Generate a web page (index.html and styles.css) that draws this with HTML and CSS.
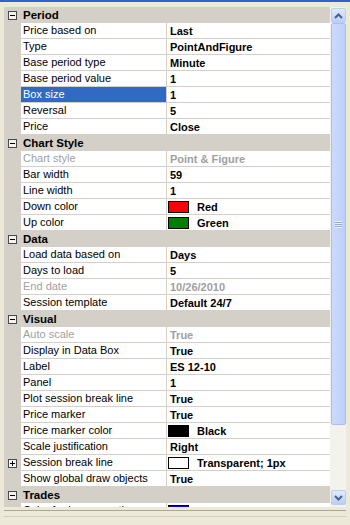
FILE: index.html
```html
<!DOCTYPE html>
<html lang="en">
<head>
    <meta charset="UTF-8">
    <meta name="viewport" content="width=device-width, initial-scale=1.0">
    <title>Chart Properties</title>
    <link rel="stylesheet" href="styles.css">
</head>
<body>

    <div class="titlebar"></div>

    <div class="frame">
        <div class="grid">
            <!-- Period -->
            <div class="cat"><div class="gutter"><span class="toggle minus"></span></div><div class="cat-name">Period</div></div>
            <div class="row"><div class="gutter"></div><div class="label">Price based on</div><div class="value">Last</div></div>
            <div class="row"><div class="gutter"></div><div class="label">Type</div><div class="value">PointAndFigure</div></div>
            <div class="row"><div class="gutter"></div><div class="label">Base period type</div><div class="value">Minute</div></div>
            <div class="row"><div class="gutter"></div><div class="label">Base period value</div><div class="value">1</div></div>
            <div class="row"><div class="gutter"></div><div class="label selected">Box size</div><div class="value">1</div></div>
            <div class="row"><div class="gutter"></div><div class="label">Reversal</div><div class="value">5</div></div>
            <div class="row"><div class="gutter"></div><div class="label">Price</div><div class="value">Close</div></div>

            <!-- Chart Style -->
            <div class="cat"><div class="gutter"><span class="toggle minus"></span></div><div class="cat-name">Chart Style</div></div>
            <div class="row disabled"><div class="gutter"></div><div class="label">Chart style</div><div class="value">Point &amp; Figure</div></div>
            <div class="row"><div class="gutter"></div><div class="label">Bar width</div><div class="value">59</div></div>
            <div class="row"><div class="gutter"></div><div class="label">Line width</div><div class="value">1</div></div>
            <div class="row"><div class="gutter"></div><div class="label">Down color</div><div class="value"><span class="swatch red"></span>Red</div></div>
            <div class="row"><div class="gutter"></div><div class="label">Up color</div><div class="value"><span class="swatch green"></span>Green</div></div>

            <!-- Data -->
            <div class="cat"><div class="gutter"><span class="toggle minus"></span></div><div class="cat-name">Data</div></div>
            <div class="row"><div class="gutter"></div><div class="label">Load data based on</div><div class="value">Days</div></div>
            <div class="row"><div class="gutter"></div><div class="label">Days to load</div><div class="value">5</div></div>
            <div class="row disabled"><div class="gutter"></div><div class="label">End date</div><div class="value">10/26/2010</div></div>
            <div class="row"><div class="gutter"></div><div class="label">Session template</div><div class="value">Default 24/7</div></div>

            <!-- Visual -->
            <div class="cat"><div class="gutter"><span class="toggle minus"></span></div><div class="cat-name">Visual</div></div>
            <div class="row disabled"><div class="gutter"></div><div class="label">Auto scale</div><div class="value">True</div></div>
            <div class="row"><div class="gutter"></div><div class="label">Display in Data Box</div><div class="value">True</div></div>
            <div class="row"><div class="gutter"></div><div class="label">Label</div><div class="value">ES 12-10</div></div>
            <div class="row"><div class="gutter"></div><div class="label">Panel</div><div class="value">1</div></div>
            <div class="row"><div class="gutter"></div><div class="label">Plot session break line</div><div class="value">True</div></div>
            <div class="row"><div class="gutter"></div><div class="label">Price marker</div><div class="value">True</div></div>
            <div class="row"><div class="gutter"></div><div class="label">Price marker color</div><div class="value"><span class="swatch black"></span>Black</div></div>
            <div class="row"><div class="gutter"></div><div class="label">Scale justification</div><div class="value">Right</div></div>
            <div class="row"><div class="gutter"><span class="toggle plus"></span></div><div class="label">Session break line</div><div class="value"><span class="swatch clear"></span>Transparent; 1px</div></div>
            <div class="row"><div class="gutter"></div><div class="label">Show global draw objects</div><div class="value">True</div></div>

            <!-- Trades -->
            <div class="cat"><div class="gutter"><span class="toggle minus"></span></div><div class="cat-name">Trades</div></div>
            <div class="row"><div class="gutter"></div><div class="label">Color for buy executions</div><div class="value"><span class="swatch blue"></span>Blue</div></div>
        </div>

        <div class="scrollbar">
            <div class="sb-button">
                <svg width="9" height="6" viewBox="0 0 9 6"><polyline points="1,5 4.5,1.5 8,5" fill="none" stroke="#4d6185" stroke-width="2"/></svg>
            </div>
            <div class="sb-thumb"><span class="grip"></span></div>
            <div class="sb-track"></div>
            <div class="sb-button">
                <svg width="9" height="6" viewBox="0 0 9 6"><polyline points="1,1 4.5,4.5 8,1" fill="none" stroke="#4d6185" stroke-width="2"/></svg>
            </div>
        </div>
    </div>

    <div class="help-panel"></div>

</body>
</html>
```

FILE: styles.css
```css
body {
    font-family: "Liberation Sans", Arial, sans-serif;
    font-size: 11px;
    margin: 0;
    width: 350px;
    height: 525px;
    overflow: hidden;
    background-color: #ece9d8;
    color: #000;
}

.titlebar {
    height: 2px;
    background-color: #2f62cf;
}

/* Grid + scrollbar */
.frame {
    display: flex;
    height: 500px;
    margin: 5px 4px 0 4px;
    overflow: hidden;
}

.grid {
    width: 326px;
    background-color: #fff;
    overflow: hidden;
}

.row,
.cat {
    display: flex;
    height: 16px;
}

.gutter {
    width: 17px;
    flex-shrink: 0;
    display: flex;
    align-items: center;
    background-color: #d4d0c8;
}

.label {
    width: 143px;
    padding-left: 2px;
    border-right: 1px solid #d4d0c8;
    border-bottom: 1px solid #d4d0c8;
    line-height: 15px;
    white-space: nowrap;
    overflow: hidden;
}

.label.selected {
    background-color: #316ac5;
    color: #fff;
}

.value {
    flex: 1;
    display: flex;
    align-items: center;
    padding-left: 3px;
    height: 15px;
    border-bottom: 1px solid #d4d0c8;
    font-weight: bold;
    white-space: nowrap;
}

.disabled .label,
.disabled .value {
    color: #a0a0a0;
}

/* Category header */
.cat {
    background-color: #d4d0c8;
}

.cat-name {
    padding-left: 2px;
    line-height: 16px;
    font-weight: bold;
    font-size: 11.5px;
}

.toggle {
    position: relative;
    width: 7px;
    height: 7px;
    margin-left: 4px;
    border: 1px solid #4a4a4a;
    background-color: #f4f3ee;
}

.toggle::before {
    content: "";
    position: absolute;
    left: 1px;
    top: 3px;
    width: 5px;
    height: 1px;
    background-color: #000;
}

.toggle.plus::after {
    content: "";
    position: absolute;
    left: 3px;
    top: 1px;
    width: 1px;
    height: 5px;
    background-color: #000;
}

/* Colour swatches */
.swatch {
    width: 19px;
    height: 10px;
    margin-left: -2px;
    margin-right: 8px;
    border: 1px solid #000;
}

.swatch.red { background-color: #ff0000; }
.swatch.green { background-color: #008000; }
.swatch.black { background-color: #000; }
.swatch.clear { background-color: #fff; }
.swatch.blue { background-color: #0000ff; }

/* XP style scrollbar */
.scrollbar {
    width: 16px;
    display: flex;
    flex-direction: column;
    padding: 1px 0 2px 1px;
    box-sizing: border-box;
    background-color: #f3f2ec;
}

.sb-button {
    height: 15px;
    flex-shrink: 0;
    box-sizing: border-box;
    display: flex;
    align-items: center;
    justify-content: center;
    border: 1px solid #b9cdf6;
    border-radius: 2px;
    background: linear-gradient(#e2ebfe, #b8cdfa);
}

.sb-thumb {
    height: 402px;
    flex-shrink: 0;
    box-sizing: border-box;
    display: flex;
    align-items: center;
    justify-content: center;
    border: 1px solid #a9bdee;
    border-radius: 2px;
    background: linear-gradient(90deg, #cbdafd, #bccffb);
}

.grip {
    width: 7px;
    height: 7px;
    background: repeating-linear-gradient(#eef3ff 0 1px, #8ea8e6 1px 2px);
}

.sb-track {
    flex: 1;
}

/* Description area below the grid */
.help-panel {
    height: 14px;
    margin: 3px 4px 0 4px;
    border-top: 1px solid #aca899;
    background-color: #ece9d8;
    box-shadow: inset 0 5px 0 #ece9d8, inset 0 6px 0 #d0cec3;
}
```
